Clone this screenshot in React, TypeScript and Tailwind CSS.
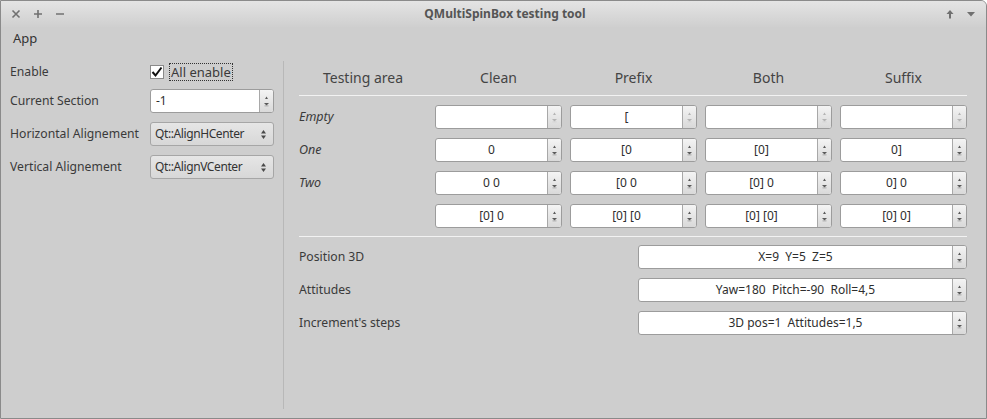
import React from "react";

const font = { fontFamily: '"Noto Sans", "Open Sans", sans-serif' };

function Arrows({ disabled }: { disabled?: boolean }) {
  const c = disabled ? "#b4b4b4" : "#5a5a5a";
  return (
    <svg width="7" height="16" viewBox="0 0 7 16">
      <path d="M3.5 3.5 L5 6 L2 6 Z" fill={c} />
      <path d="M1 10 L6 10 L3.5 12.5 Z" fill={c} />
      <rect x="1.5" y="12.5" width="4" height="0.8" fill={disabled ? "#cfcfcf" : "#9a9a9a"} />
    </svg>
  );
}

function SpinBox({
  value = "",
  disabled,
  align = "center",
  className = "",
}: {
  value?: string;
  disabled?: boolean;
  align?: "center" | "left";
  className?: string;
}) {
  return (
    <div
      className={`flex h-[24px] overflow-hidden rounded-[3px] border border-[#9c9c9c] bg-white ${className}`}
    >
      <div
        className={`flex flex-1 items-center whitespace-pre px-[5px] text-[12px] text-[#2e2e2e] ${
          align === "center" ? "justify-center" : "justify-start"
        }`}
      >
        {value}
      </div>
      <div className="flex w-[14px] items-center justify-center border-l border-[#a8a8a8] bg-gradient-to-b from-[#f4f4f4] to-[#d9d9d9]">
        <Arrows disabled={disabled} />
      </div>
    </div>
  );
}

function Combo({ value }: { value: string }) {
  return (
    <div className="flex h-[24px] w-[124px] items-center justify-between rounded-[3px] border border-[#a6a6a6] bg-gradient-to-b from-[#e6e6e6] to-[#d7d7d7] pl-[4px] pr-[6px] text-[12px] tracking-[-0.4px] text-[#333]">
      <span>{value}</span>
      <svg width="7" height="14" viewBox="0 0 7 14">
        <path d="M3.5 3 L6 6.5 L1 6.5 Z" fill="#4a4a4a" />
        <path d="M1 8.5 L6 8.5 L3.5 12 Z" fill="#4a4a4a" />
      </svg>
    </div>
  );
}

const grid = [
  { label: "Empty", values: ["", "[", "", ""], disabled: true },
  { label: "One", values: ["0", "[0", "[0]", "0]"] },
  { label: "Two", values: ["0 0", "[0 0", "[0] 0", "0] 0"] },
  { label: "", values: ["[0] 0", "[0] [0", "[0] [0]", "[0] 0]"] },
];

const bottom = [
  { label: "Position 3D", value: "X=9  Y=5  Z=5" },
  { label: "Attitudes", value: "Yaw=180  Pitch=-90  Roll=4,5" },
  { label: "Increment's steps", value: "3D pos=1  Attitudes=1,5" },
];

export default function App() {
  return (
    <div
      style={font}
      className="flex h-[419px] w-[987px] flex-col overflow-hidden rounded-tr-[6px] border border-[#8a8a8a] bg-[#cecece] text-[#3a3a3a]"
    >
      {/* title bar */}
      <div className="relative flex h-[26px] shrink-0 items-center bg-gradient-to-b from-[#e4e4e4] to-[#cfcfcf] px-[9px]">
        <div className="flex items-center gap-[10px] text-[#6a6a6a]">
          <svg width="12" height="12" viewBox="0 0 12 12">
            <path d="M2.5 2.5 L9.5 9.5 M9.5 2.5 L2.5 9.5" stroke="#707070" strokeWidth="1.6" />
          </svg>
          <svg width="12" height="12" viewBox="0 0 12 12">
            <path d="M6 2 V10 M2 6 H10" stroke="#707070" strokeWidth="1.6" />
          </svg>
          <svg width="12" height="12" viewBox="0 0 12 12">
            <path d="M2 6 H10" stroke="#707070" strokeWidth="1.6" />
          </svg>
        </div>
        <div className="flex-1 text-center text-[12px] font-bold text-[#555]">
          QMultiSpinBox testing tool
        </div>
        <div className="flex items-center gap-[9px]">
          <svg width="12" height="12" viewBox="0 0 12 12">
            <path d="M6 2 L9.5 6 H7 V10.5 H5 V6 H2.5 Z" fill="#707070" />
          </svg>
          <svg width="12" height="12" viewBox="0 0 12 12">
            <path d="M2 4 H10 L6 8.5 Z" fill="#707070" />
          </svg>
        </div>
      </div>

      {/* menu bar */}
      <div className="flex h-[23px] shrink-0 items-center px-[12px] text-[13px] text-[#333]">
        App
      </div>

      <div className="flex flex-1">
        {/* left panel */}
        <div className="w-[282px] shrink-0 pl-[9px] pt-[10px] text-[12.2px]">
          <div className="flex h-[24px] items-center">
            <div className="w-[140px]">Enable</div>
            <div className="flex items-center">
              <div className="flex h-[14px] w-[14px] items-center justify-center border border-[#8a8a8a] bg-white">
                <svg width="12" height="12" viewBox="0 0 12 12">
                  <path d="M1.5 6 L4.5 9.5 L10.5 1.5" stroke="#111" strokeWidth="2" fill="none" />
                </svg>
              </div>
              <span className="ml-[5px] border border-dotted border-[#333] px-[1px] text-[13px] leading-[16px]">
                All enable
              </span>
            </div>
          </div>
          <div className="mt-[5px] flex h-[24px] items-center">
            <div className="w-[140px]">Current Section</div>
            <SpinBox value="-1" align="left" className="w-[124px]" />
          </div>
          <div className="mt-[9px] flex h-[24px] items-center">
            <div className="w-[140px]">Horizontal Alignement</div>
            <Combo value="Qt::AlignHCenter" />
          </div>
          <div className="mt-[9px] flex h-[24px] items-center">
            <div className="w-[140px]">Vertical Alignement</div>
            <Combo value="Qt::AlignVCenter" />
          </div>
        </div>

        {/* separator */}
        <div className="mt-[11px] mb-[9px] w-[2px] border-l border-[#b8b8b8] bg-[#f4f4f4]" />

        {/* right panel */}
        <div className="flex-1 pl-[15px] pr-[19px] pt-[17px]">
          <div className="grid grid-cols-[128px_127px_127px_127px_127px] gap-x-[8px] text-[14px] text-[#444]">
            <div className="text-center">Testing area</div>
            <div className="text-center">Clean</div>
            <div className="text-center">Prefix</div>
            <div className="text-center">Both</div>
            <div className="text-center">Suffix</div>
          </div>
          <div className="mt-[7px] h-[1px] bg-[#f2f2f2]" />
          <div className="mt-[9px] flex flex-col gap-[9px]">
            {grid.map((row, i) => (
              <div
                key={i}
                className="grid h-[24px] grid-cols-[128px_127px_127px_127px_127px] items-center gap-x-[8px]"
              >
                <div className="text-[12.5px] italic">{row.label}</div>
                {row.values.map((v, j) => (
                  <SpinBox key={j} value={v} disabled={row.disabled} />
                ))}
              </div>
            ))}
          </div>
          <div className="mt-[8px] h-[1px] bg-[#f2f2f2]" />
          <div className="mt-[8px] flex flex-col gap-[9px]">
            {bottom.map((row) => (
              <div key={row.label} className="flex h-[24px] items-center">
                <div className="flex-1 text-[12.2px]">{row.label}</div>
                <SpinBox value={row.value} className="w-[329px]" />
              </div>
            ))}
          </div>
        </div>
      </div>
    </div>
  );
}
